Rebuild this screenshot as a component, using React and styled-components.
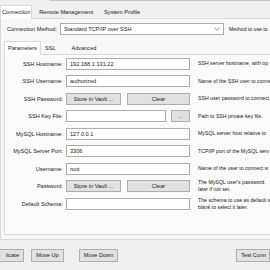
import React from "react";
import styled, { createGlobalStyle } from "styled-components";

const Global = createGlobalStyle`
  html, body {
    margin: 0;
    padding: 0;
    background: #f0f0f0;
    overflow: hidden;
  }
  body {
    font-family: "Liberation Sans", Arial, sans-serif;
    font-size: 5.6px;
    color: #1a1a1a;
  }
`;

const Page = styled.div`
  width: 270px;
  height: 270px;
  display: flex;
  flex-direction: column;
  overflow: hidden;
`;

const TopRule = styled.div`
  height: 5px;
  margin-left: 50px;
  border-top: 1px solid #c9c9c9;
  box-sizing: border-box;
`;

const TabBar = styled.div`
  display: flex;
  height: 13px;
  border-bottom: 1px solid #d9d9d9;
  box-sizing: content-box;
`;

const Tab = styled.div`
  display: flex;
  align-items: center;
  padding: 0 ${(p) => p.$pad || 3}px;
  margin-right: ${(p) => p.$gap || 0}px;
  background: ${(p) => (p.$active ? "#ffffff" : "transparent")};
  border: 1px solid ${(p) => (p.$active ? "#d9d9d9" : "transparent")};
  border-bottom: none;
  margin-bottom: -1px;
  white-space: nowrap;
`;

const OuterPane = styled.div`
  height: 221px;
  border-left: 1px solid #d9d9d9;
  border-bottom: 1px solid #d9d9d9;
  background: #f7f7f7;
  display: flex;
  flex-direction: column;
  overflow: hidden;
`;

const MethodRow = styled.div`
  display: flex;
  align-items: center;
  height: 19px;
  padding-left: 3px;
  margin-top: 1px;
  white-space: nowrap;
`;

const Label = styled.div`
  width: ${(p) => (p.$w ? `${p.$w}px` : "auto")};
  box-sizing: border-box;
  text-align: right;
  padding-right: 3px;
  white-space: nowrap;
  flex-shrink: 0;
`;

const Select = styled.div`
  width: 164px;
  flex-shrink: 0;
  height: 12px;
  box-sizing: border-box;
  border: 1px solid #adadad;
  background: #fff;
  display: flex;
  align-items: center;
  justify-content: space-between;
  padding: 0 3px;
  margin-right: 5px;
`;

const Desc = styled.div`
  white-space: nowrap;
  line-height: 7px;
  font-size: 5.2px;
  color: #222;
  overflow: hidden;
`;

const InnerWrap = styled.div`
  padding-left: 3px;
  margin-top: 2px;
  display: flex;
  flex-direction: column;
`;

const InnerPane = styled.div`
  height: 179px;
  border-left: 1px solid #d9d9d9;
  border-bottom: 1px solid #d9d9d9;
  background: #fafafa;
  display: grid;
  grid-template-columns: 61px 124px 1fr;
  grid-auto-rows: 17.5px;
  align-items: center;
  align-content: start;
`;

const Field = styled.div`
  display: flex;
  gap: ${(p) => p.$gap || 5}px;
`;

const Input = styled.div`
  flex: 1;
  height: 12px;
  box-sizing: border-box;
  border: 1px solid #adadad;
  background: #fff;
  display: flex;
  align-items: center;
  padding-left: 3px;
`;

const Button = styled.div`
  width: ${(p) => p.$w || 54}px;
  height: 12px;
  box-sizing: border-box;
  border: 1px solid #adadad;
  background: #e1e1e1;
  display: flex;
  align-items: center;
  justify-content: center;
  white-space: nowrap;
  overflow: hidden;
`;

const DescCell = styled(Desc)`
  padding-left: 8px;
`;

const Footer = styled.div`
  display: flex;
  align-items: center;
  height: 30px;
`;

const Spacer = styled.div`
  flex: 1;
`;

const FootButton = styled(Button)`
  margin-left: ${(p) => p.$ml || 0}px;
  height: 13px;
  justify-content: ${(p) => p.$align || "center"};
  padding: 0 4px;
`;

const Chevron = () => (
  <svg width="6" height="4" viewBox="0 0 6 4">
    <path d="M0.5 0.8 L3 3.2 L5.5 0.8" fill="none" stroke="#777" strokeWidth="0.8" />
  </svg>
);

const rows = [
  { label: "SSH Hostname:", value: "192.168.1.131:22", desc: "SSH server hostname, with  op" },
  { label: "SSH Username:", value: "authorized", desc: "Name of the SSH user to conne" },
  { label: "SSH Password:", vault: true, desc: "SSH user password to connect" },
  { label: "SSH Key File:", file: true, desc: "Path to SSH private key file." },
  { label: "MySQL Hostname:", value: "127.0.0.1", desc: "MySQL server host relative to" },
  { label: "MySQL Server Port:", value: "3306", desc: "TCP/IP port of the MySQL serv" },
  { label: "Username:", value: "root", desc: "Name of the user to connect w" },
  { label: "Password:", vault: true, desc: ["The MySQL user's password.", "later if not set."] },
  { label: "Default Schema:", value: "", desc: ["The schema to use as default s", "blank to select it later."] },
];

function Row({ row }) {
  let field;
  if (row.vault) {
    field = (
      <Field $gap={6}>
        <Button $w={55}>Store in Vault ...</Button>
        <Button $w={63}>Clear</Button>
      </Field>
    );
  } else if (row.file) {
    field = (
      <Field $gap={5}>
        <Input />
        <Button $w={19}>...</Button>
      </Field>
    );
  } else {
    field = (
      <Field>
        <Input>{row.value}</Input>
      </Field>
    );
  }
  const lines = Array.isArray(row.desc) ? row.desc : [row.desc];
  return (
    <>
      <Label>{row.label}</Label>
      {field}
      <DescCell>
        {lines.map((l) => (
          <div key={l}>{l}</div>
        ))}
      </DescCell>
    </>
  );
}

export default function App() {
  return (
    <Page>
      <Global />
      <TopRule />
      <TabBar>
        <Tab $active $pad={1} $gap={3}>Connection</Tab>
        <Tab $gap={3}>Remote Management</Tab>
        <Tab>System Profile</Tab>
      </TabBar>
      <OuterPane>
        <MethodRow>
          <Label $w={56}>Connection Method:</Label>
          <Select>
            <span>Standard TCP/IP over SSH</span>
            <Chevron />
          </Select>
          <Desc>Method to use to</Desc>
        </MethodRow>
        <InnerWrap>
          <TabBar>
            <Tab $active $pad={3}>Parameters</Tab>
            <Tab $pad={3} $gap={8}>SSL</Tab>
            <Tab>Advanced</Tab>
          </TabBar>
          <InnerPane>
            {rows.map((r) => (
              <Row key={r.label} row={r} />
            ))}
          </InnerPane>
        </InnerWrap>
      </OuterPane>
      <Footer>
        <FootButton $w={25} $ml={-1} $align="flex-end">licate</FootButton>
        <FootButton $w={33} $ml={7}>Move Up</FootButton>
        <FootButton $w={39} $ml={15}>Move Down</FootButton>
        <Spacer />
        <FootButton $w={34} $align="flex-start">Test Conn</FootButton>
      </Footer>
    </Page>
  );
}
